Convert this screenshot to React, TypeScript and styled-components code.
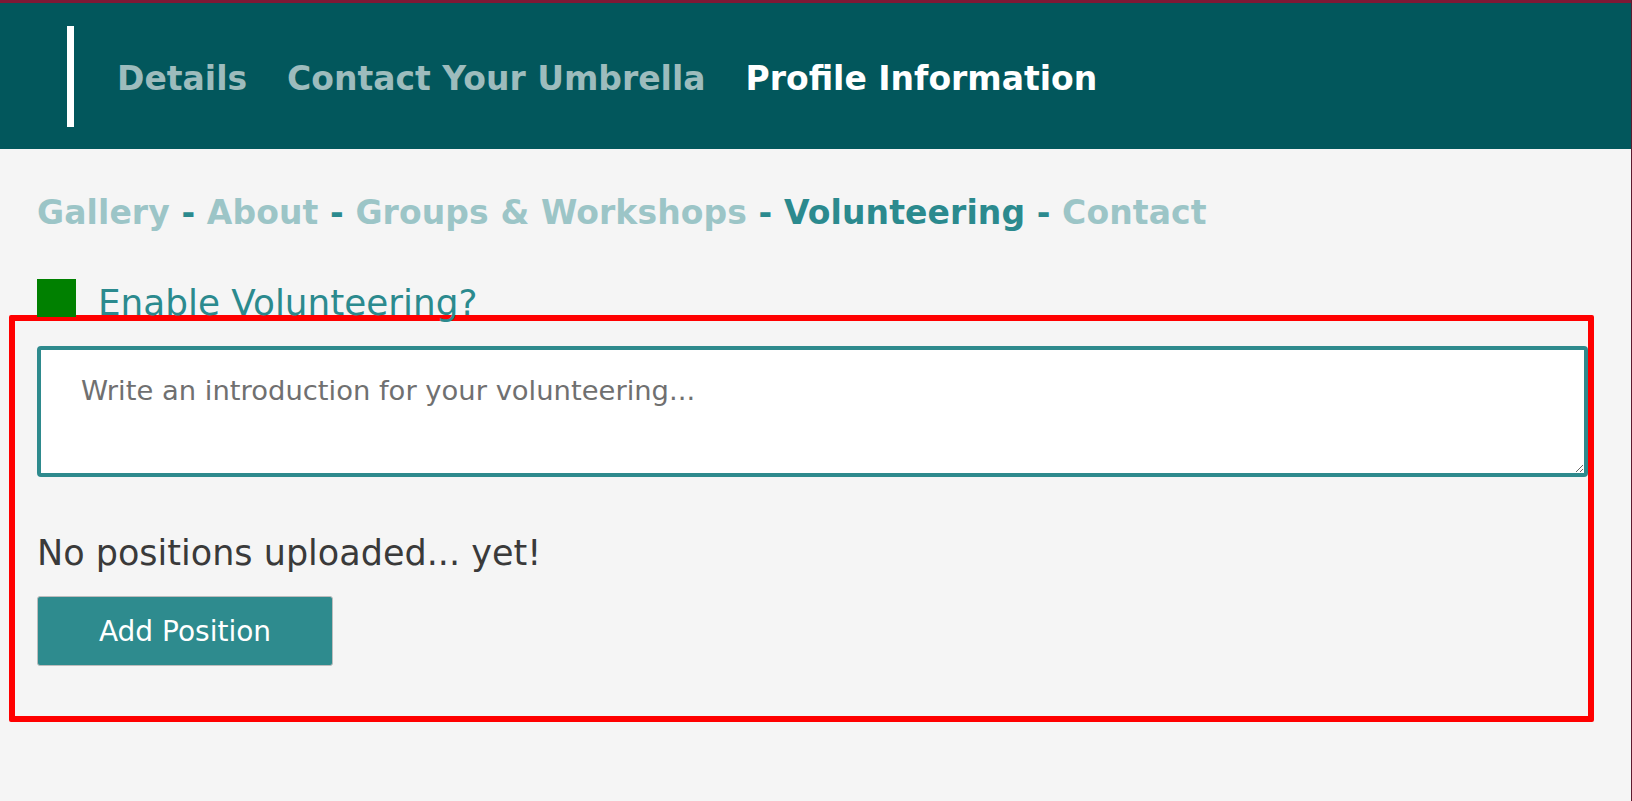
import { useState } from 'react';
import styled, { createGlobalStyle } from 'styled-components';

const GlobalStyle = createGlobalStyle`
    html, body {
        margin: 0;
        padding: 0;
        background-color: #f5f5f5;
    }
    body {
        font-family: "DejaVu Sans", "Liberation Sans", sans-serif;
    }
`;

const tabs = ['Details', 'Contact Your Umbrella', 'Profile Information'];
const sections = ['Gallery', 'About', 'Groups & Workshops', 'Volunteering', 'Contact'];

const App = () => {
    /* States */
    const [activeTab] = useState<string>('Profile Information');
    const [activeSection] = useState<string>('Volunteering');
    const [intro, setIntro] = useState<string>('');

    return (<Page>
        <GlobalStyle />
        <Header>
            <Stripe />
            <TabList>
                {tabs.map(tab => (
                    <Tab key={tab} active={tab === activeTab}>{tab}</Tab>
                ))}
            </TabList>
        </Header>
        <Content>
            <Breadcrumb>
                {sections.map((section, i) => (
                    <span key={section}>
                        {i > 0 && <Dash> - </Dash>}
                        <Crumb active={section === activeSection}>{section}</Crumb>
                    </span>
                ))}
            </Breadcrumb>
            <ToggleRow>
                <Checkbox />
                <ToggleLabel>Enable Volunteering?</ToggleLabel>
            </ToggleRow>
            <Highlight>
                <IntroInput
                    value={intro}
                    onChange={(e) => setIntro(e.target.value)}
                    placeholder="Write an introduction for your volunteering..."
                />
                <EmptyText>No positions uploaded... yet!</EmptyText>
                <AddButton>Add Position</AddButton>
            </Highlight>
        </Content>
    </Page>);
};

const Page = styled.div`
    min-height: 801px;
    border-right: 1px solid #5e1a2e;
    box-sizing: border-box;
`;

const Header = styled.header`
    display: flex;
    align-items: center;
    height: 149px;
    box-sizing: border-box;
    padding: 23px 0 22px 67px;
    border-top: 3px solid #7e1835;
    background-color: #02575c;
`;

const Stripe = styled.div`
    width: 7px;
    height: 101px;
    background-color: #ffffff;
`;

const TabList = styled.nav`
    display: flex;
    align-items: center;
    gap: 40px;
    margin-left: 43px;
    margin-top: 4px;
`;

const Tab = styled.div<{ active: boolean }>`
    font-size: 33px;
    font-weight: bold;
    letter-spacing: 0;
    cursor: pointer;
    color: ${props => props.active ? '#ffffff' : '#9dbcbd'};
`;

const Content = styled.main`
    padding: 44px 36px 0 37px;
`;

const Breadcrumb = styled.div`
    font-size: 33px;
    line-height: 40px;
    font-weight: bold;
    letter-spacing: 0.1px;
    white-space: pre;
`;

const Dash = styled.span`
    color: #2b8a8e;
`;

const Crumb = styled.span<{ active: boolean }>`
    cursor: pointer;
    color: ${props => props.active ? '#2b8a8e' : '#9cc5c7'};
`;

const ToggleRow = styled.div`
    position: relative;
    z-index: 1;
    display: flex;
    align-items: flex-start;
    margin-top: 46px;
    height: 38px;
`;

const Checkbox = styled.div`
    width: 39px;
    height: 38px;
    background-color: #008000;
`;

const ToggleLabel = styled.div`
    margin-left: 22px;
    margin-top: 6px;
    font-size: 35.8px;
    line-height: 1;
    color: #2b8a8e;
`;

const Highlight = styled.section`
    margin: -2px 1px 0 -28px;
    padding: 25px 0 50px 22px;
    border: 6px solid #ff0000;
    border-radius: 2px;
`;

const IntroInput = styled.textarea`
    display: block;
    width: 100%;
    height: 131px;
    box-sizing: border-box;
    margin: 0;
    padding: 20px 40px;
    border: 4px solid #2e8a8d;
    border-radius: 4px;
    background-color: #ffffff;
    font-family: "DejaVu Sans", "Liberation Sans", sans-serif;
    font-size: 27.4px;
    line-height: 1.5;
    color: #333333;
    outline: none;

    &::placeholder {
        color: #707070;
    }
`;

const EmptyText = styled.p`
    margin: 55px 0 0;
    font-size: 35px;
    line-height: 42px;
    color: #3a3a3a;
`;

const AddButton = styled.button`
    display: flex;
    align-items: center;
    justify-content: center;
    margin-top: 22px;
    width: 296px;
    height: 70px;
    border: 1px solid #bdbdbd;
    border-radius: 3px;
    background-color: #2e8b8e;
    font-family: "DejaVu Sans", "Liberation Sans", sans-serif;
    font-size: 28px;
    color: #ffffff;
    cursor: pointer;
`;

export default App;
